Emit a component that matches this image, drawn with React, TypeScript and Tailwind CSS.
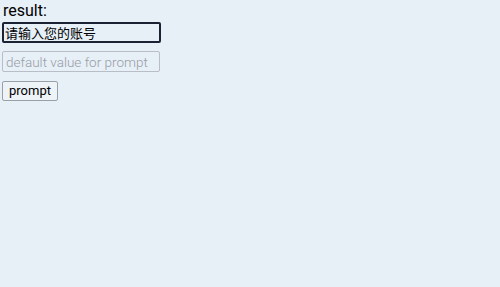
import * as React from 'react';

export default function App() {
  return (
    <div
      className="min-h-[287px] w-full bg-[#e7eff7] px-[2px] text-black"
      style={{ fontFamily: 'Roboto, "Noto Sans CJK SC", sans-serif' }}
    >
      <div className="pl-[1px] text-[16px] leading-[21px]">result:</div>
      <div className="mt-[1px] flex flex-col items-start">
        <input
          defaultValue="请输入您的账号"
          className="h-[21px] w-[159px] rounded-[2px] border-2 border-[#1b2233] bg-transparent px-[1px] text-[13px] text-black outline-none"
          style={{ fontFamily: '"Noto Sans CJK SC", sans-serif' }}
        />
        <input
          placeholder="default value for prompt"
          className="mt-[8px] h-[21px] w-[158px] rounded-[2px] border border-[#b9bec6] bg-transparent px-[3px] text-[13.5px] font-light text-black outline-none placeholder:text-[#979da6]"
        />
        <button className="mt-[9px] h-[20px] w-[56px] rounded-[2px] border border-[#9aa0a8] bg-[#eef3f8] text-[13px] leading-[18px] text-black">
          prompt
        </button>
      </div>
    </div>
  );
}
